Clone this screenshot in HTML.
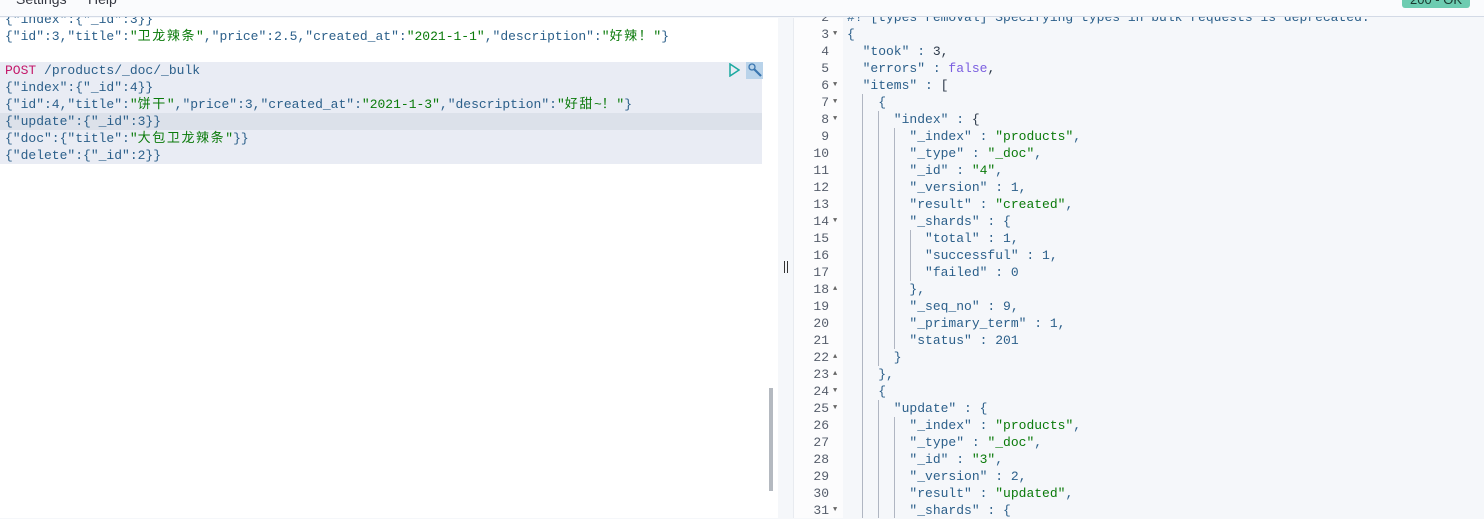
<!DOCTYPE html>
<html><head><meta charset="utf-8"><style>
*{margin:0;padding:0;box-sizing:border-box}
body{width:1484px;height:518px;overflow:hidden;background:#f5f7fa;position:relative;font-family:"Liberation Mono","Noto Sans CJK SC",monospace;font-size:13px}
.top{position:absolute;left:0;top:0;width:1484px;height:17px;background:#fafbfd;border-bottom:1px solid #d3dae6;z-index:5;overflow:hidden}
.top span{position:absolute;top:-9px;font-family:"Liberation Sans",sans-serif;font-size:14px;color:#343741}
.badge{position:absolute;left:1402px;top:-10px;width:68px;height:17px;background:#6dccb1;border-radius:3px;font-family:"Liberation Sans",sans-serif;font-size:13px;color:#1a3a30;text-align:center;line-height:17px}
.left{position:absolute;left:0;top:18px;width:778px;height:500px;background:#fff}
.ln{position:absolute;left:5px;height:17px;line-height:17px;white-space:pre;color:#2b5f8a}
.g{color:#0a7a0a}.r{color:#c4186a}.p{color:#7a5ee0}.n{color:#2d3a4a}
.c{letter-spacing:1.6px}
.hl{position:absolute;left:0;top:62px;width:762px;height:102px;background:#e9ecf4}
.cur{position:absolute;left:0;top:113px;width:762px;height:17px;background:#dce1ea}
.gut{position:absolute;left:793px;top:18px;width:50px;height:500px;background:#fcfcfd;border-left:1px solid #e8ebf0}
.num{position:absolute;width:36px;text-align:right;color:#555d6b;left:793px;height:17px;line-height:17px}
.arr{position:absolute;left:833px;font-size:7px;color:#666;height:17px;line-height:17px}
.rl{position:absolute;left:847px;height:17px;line-height:17px;white-space:pre;color:#2b5f8a}
.gd{position:absolute;width:1px;background:#b0b6c2}
</style></head><body>
<div class="top"><span style="left:16px">Settings</span><span style="left:88px">Help</span><div class="badge" style="top:-9px">200 - OK</div></div>
<div class="left"></div>
<div class="hl"></div><div class="cur"></div>
<div class="ln" style="top:11px">{"index":{"_id":3}}</div>
<div class="ln" style="top:28px">{"id":3,"title":<span class="g">"<span class="c">卫龙辣条</span>"</span>,"price":2.5,"created_at":<span class="g">"2021-1-1"</span>,"description":<span class="g">"<span class="c">好辣！</span>"</span>}</div>
<div class="ln" style="top:62px"><span class="r">POST</span> /products/_doc/_bulk</div>
<div class="ln" style="top:79px">{"index":{"_id":4}}</div>
<div class="ln" style="top:96px">{"id":4,"title":<span class="g">"<span class="c">饼干</span>"</span>,"price":3,"created_at":<span class="g">"2021-1-3"</span>,"description":<span class="g">"<span class="c">好甜</span>~<span class="c">！</span>"</span>}</div>
<div class="ln" style="top:113px">{"update":{"_id":3}}</div>
<div class="ln" style="top:130px">{"doc":{"title":<span class="g">"<span class="c">大包卫龙辣条</span>"</span>}}</div>
<div class="ln" style="top:147px">{"delete":{"_id":2}}</div>
<svg style="position:absolute;left:728px;top:63px" width="12" height="14"><path d="M2 1 L11 7 L2 13 Z" fill="none" stroke="#1ba9a0" stroke-width="1.5"/></svg>
<div style="position:absolute;left:746px;top:62px;width:17px;height:17px;background:#b9d3ea"></div>
<svg style="position:absolute;left:747px;top:62px" width="16" height="17"><circle cx="5" cy="5" r="3" fill="none" stroke="#3a76b0" stroke-width="1.3"/><path d="M7 7 L14 14" stroke="#3a76b0" stroke-width="2.2"/></svg>
<div style="position:absolute;left:769px;top:388px;width:4px;height:103px;background:#b4b9c0"></div>
<div style="position:absolute;left:784px;top:261px;width:1px;height:12px;background:#333"></div>
<div style="position:absolute;left:787px;top:261px;width:1px;height:12px;background:#333"></div>
<div class="gut"></div>
<div class="num" style="top:9px">2</div>
<div class="num" style="top:26px">3</div><div class="arr" style="top:26px">▼</div>
<div class="num" style="top:43px">4</div>
<div class="num" style="top:60px">5</div>
<div class="num" style="top:77px">6</div><div class="arr" style="top:77px">▼</div>
<div class="num" style="top:94px">7</div><div class="arr" style="top:94px">▼</div>
<div class="num" style="top:111px">8</div><div class="arr" style="top:111px">▼</div>
<div class="num" style="top:128px">9</div>
<div class="num" style="top:145px">10</div>
<div class="num" style="top:162px">11</div>
<div class="num" style="top:179px">12</div>
<div class="num" style="top:196px">13</div>
<div class="num" style="top:213px">14</div><div class="arr" style="top:213px">▼</div>
<div class="num" style="top:230px">15</div>
<div class="num" style="top:247px">16</div>
<div class="num" style="top:264px">17</div>
<div class="num" style="top:281px">18</div><div class="arr" style="top:281px">▲</div>
<div class="num" style="top:298px">19</div>
<div class="num" style="top:315px">20</div>
<div class="num" style="top:332px">21</div>
<div class="num" style="top:349px">22</div><div class="arr" style="top:349px">▲</div>
<div class="num" style="top:366px">23</div><div class="arr" style="top:366px">▲</div>
<div class="num" style="top:383px">24</div><div class="arr" style="top:383px">▼</div>
<div class="num" style="top:400px">25</div><div class="arr" style="top:400px">▼</div>
<div class="num" style="top:417px">26</div>
<div class="num" style="top:434px">27</div>
<div class="num" style="top:451px">28</div>
<div class="num" style="top:468px">29</div>
<div class="num" style="top:485px">30</div>
<div class="num" style="top:502px">31</div><div class="arr" style="top:502px">▼</div>
<div class="gd" style="left:862px;top:94px;height:424px"></div>
<div class="gd" style="left:878px;top:111px;height:255px"></div>
<div class="gd" style="left:878px;top:400px;height:118px"></div>
<div class="gd" style="left:894px;top:128px;height:221px"></div>
<div class="gd" style="left:894px;top:417px;height:101px"></div>
<div class="gd" style="left:910px;top:230px;height:51px"></div>
<div class="rl n" style="top:9px">#! [types removal] Specifying types in bulk requests is deprecated.</div>
<div class="rl n" style="top:26px">{</div>
<div class="rl" style="top:43px">  "took" : <span class="n">3,</span></div>
<div class="rl" style="top:60px">  "errors" : <span class="p">false</span><span class="n">,</span></div>
<div class="rl" style="top:77px">  "items" : <span class="n">[</span></div>
<div class="rl n" style="top:94px">    {</div>
<div class="rl" style="top:111px">      "index" : <span class="n">{</span></div>
<div class="rl" style="top:128px">        "_index" : <span class="g">"products"</span>,</div>
<div class="rl" style="top:145px">        "_type" : <span class="g">"_doc"</span>,</div>
<div class="rl" style="top:162px">        "_id" : <span class="g">"4"</span>,</div>
<div class="rl" style="top:179px">        "_version" : 1,</div>
<div class="rl" style="top:196px">        "result" : <span class="g">"created"</span>,</div>
<div class="rl" style="top:213px">        "_shards" : {</div>
<div class="rl" style="top:230px">          "total" : 1,</div>
<div class="rl" style="top:247px">          "successful" : 1,</div>
<div class="rl" style="top:264px">          "failed" : 0</div>
<div class="rl" style="top:281px">        },</div>
<div class="rl" style="top:298px">        "_seq_no" : 9,</div>
<div class="rl" style="top:315px">        "_primary_term" : 1,</div>
<div class="rl" style="top:332px">        "status" : 201</div>
<div class="rl" style="top:349px">      }</div>
<div class="rl" style="top:366px">    },</div>
<div class="rl" style="top:383px">    {</div>
<div class="rl" style="top:400px">      "update" : {</div>
<div class="rl" style="top:417px">        "_index" : <span class="g">"products"</span>,</div>
<div class="rl" style="top:434px">        "_type" : <span class="g">"_doc"</span>,</div>
<div class="rl" style="top:451px">        "_id" : <span class="g">"3"</span>,</div>
<div class="rl" style="top:468px">        "_version" : 2,</div>
<div class="rl" style="top:485px">        "result" : <span class="g">"updated"</span>,</div>
<div class="rl" style="top:502px">        "_shards" : {</div>
</body></html>
